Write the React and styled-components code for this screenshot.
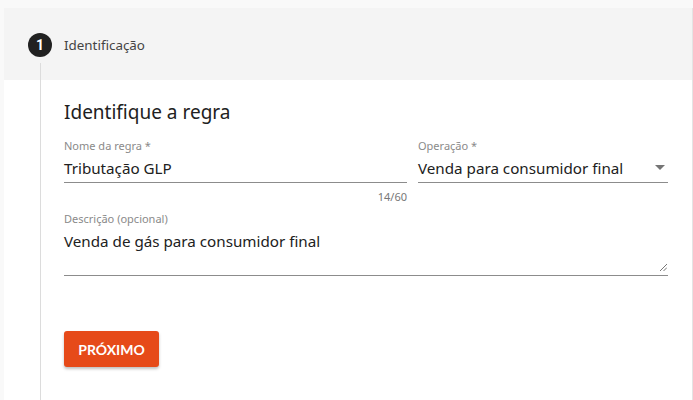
import React from "react";
import styled, { createGlobalStyle } from "styled-components";

const Global = createGlobalStyle`
  html, body { margin: 0; padding: 0; }
  body {
    background: #f9f9f9;
    font-family: "Noto Sans", "Open Sans", sans-serif;
    color: #212121;
  }
`;

const Page = styled.div`
  padding: 8px 1px 0 4px;
  height: 392px;
  overflow: hidden;
`;

const Card = styled.div`
  background: #fff;
  height: 100%;
  box-shadow: 1px 0 0 #e4e4e4;
  display: flex;
  flex-direction: column;
`;

const Header = styled.div`
  background: #f4f4f4;
  height: 72px;
  box-sizing: border-box;
  padding: 25px 0 0 24px;
  display: flex;
  align-items: stretch;
  gap: 12px;
`;

const StepCol = styled.div`
  width: 24px;
  display: flex;
  flex-direction: column;
  align-items: center;
`;

const StepCircle = styled.div`
  width: 24px;
  height: 24px;
  border-radius: 50%;
  background: #212121;
  color: #fff;
  font-family: "Roboto", sans-serif;
  font-weight: 700;
  font-size: 14px;
  display: flex;
  align-items: center;
  justify-content: center;
  flex: none;
`;

const StepLine = styled.div`
  width: 1px;
  background: #dcdcdc;
  flex: 1;
  margin-top: 6px;
`;

const StepLabel = styled.div`
  font-size: 13.4px;
  color: #444;
  line-height: 24px;
`;

const Body = styled.div`
  flex: 1;
  margin-left: 36px;
  border-left: 1px solid #dcdcdc;
  padding: 19px 24px 0 23px;
`;

const Title = styled.h2`
  margin: 0 0 14px;
  font-weight: 400;
  font-size: 19px;
  line-height: 26px;
  color: #212121;
`;

const Row = styled.div`
  display: grid;
  grid-template-columns: 343px 1fr;
  column-gap: 11px;
`;

const Field = styled.div`
  display: flex;
  flex-direction: column;
`;

const Label = styled.label`
  font-size: 11px;
  line-height: 14px;
  color: #8a8a8a;
`;

const InputBox = styled.div`
  display: flex;
  justify-content: space-between;
  border-bottom: 1px solid #8c8c8c;
  height: ${(p) => p.$h || 29}px;
  align-items: ${(p) => (p.$top ? "flex-start" : "center")};
  position: relative;
`;

const Value = styled.span`
  font-size: 15.2px;
  line-height: 24px;
  color: #212121;
  padding-top: ${(p) => p.$pt || 0}px;
`;

const Caret = styled.svg`
  width: 10px;
  height: 5px;
  margin-right: 3px;
`;

const Counter = styled.div`
  text-align: right;
  font-size: 11px;
  line-height: 14px;
  color: #777;
  margin-top: 7px;
`;

const Resize = styled.svg`
  position: absolute;
  right: 1px;
  bottom: 4px;
  width: 7px;
  height: 7px;
`;

const DescField = styled(Field)`
  margin-top: 8px;
`;

const Button = styled.button`
  margin-top: 55px;
  width: 95px;
  height: 36px;
  border: none;
  border-radius: 3px;
  background: #e64a19;
  color: #fff;
  font-family: "Lato", sans-serif;
  font-weight: 700;
  font-size: 14px;
  box-shadow: 0 2px 3px rgba(0, 0, 0, 0.25);
  cursor: pointer;
`;

export default function App() {
  return (
    <>
      <Global />
      <Page>
        <Card>
          <Header>
            <StepCol>
              <StepCircle>1</StepCircle>
              <StepLine />
            </StepCol>
            <StepLabel>Identificação</StepLabel>
          </Header>
          <Body>
            <Title>Identifique a regra</Title>
            <Row>
              <Field>
                <Label>Nome da regra *</Label>
                <InputBox>
                  <Value>Tributação GLP</Value>
                </InputBox>
                <Counter>14/60</Counter>
              </Field>
              <Field>
                <Label>Operação *</Label>
                <InputBox>
                  <Value>Venda para consumidor final</Value>
                  <Caret viewBox="0 0 10 5">
                    <path d="M0 0 L10 0 L5 5 Z" fill="#757575" />
                  </Caret>
                </InputBox>
              </Field>
            </Row>
            <DescField>
              <Label>Descrição (opcional)</Label>
              <InputBox $h={49} $top>
                <Value $pt={3}>Venda de gás para consumidor final</Value>
                <Resize viewBox="0 0 7 7">
                  <path d="M7 0 L0 7 M7 3.5 L3.5 7" stroke="#777" strokeWidth="1" />
                </Resize>
              </InputBox>
            </DescField>
            <Button>PRÓXIMO</Button>
          </Body>
        </Card>
      </Page>
    </>
  );
}
